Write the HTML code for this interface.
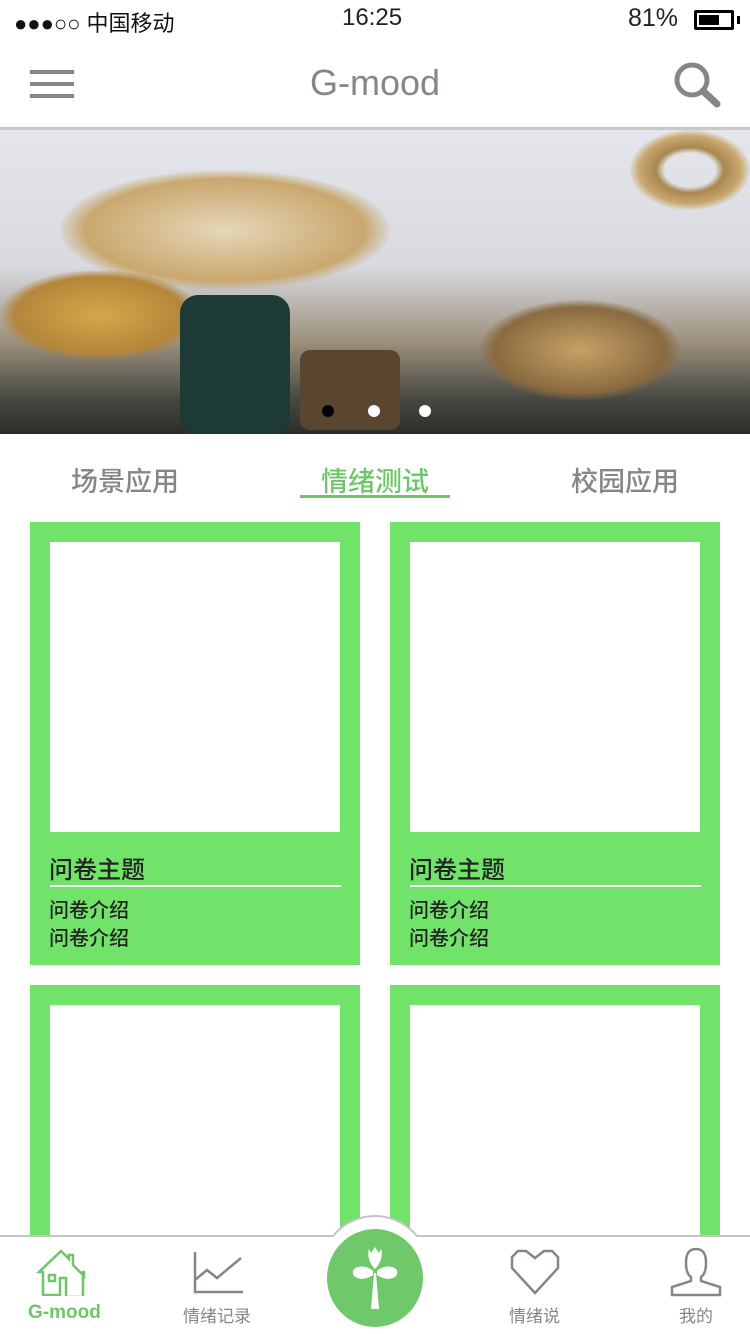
<!DOCTYPE html>
<html><head><meta charset="utf-8"><style>
*{margin:0;padding:0;box-sizing:border-box}
body{width:750px;height:1334px;overflow:hidden;background:#fff;font-family:"Liberation Sans","Noto Sans CJK SC",sans-serif;position:relative}
.abs{position:absolute}
.card{position:absolute;width:330px;background:#72e36a}
.card .in{position:absolute;left:20px;top:20px;width:290px;height:290px;background:#fff}
.t{position:absolute;left:19px;top:328px;font-size:24px;color:#222;font-weight:500}
.ln{position:absolute;left:20px;top:363px;width:291px;height:2px;background:#fff}
.d{position:absolute;left:19px;font-size:20px;color:#222;font-weight:500}
.tab{position:absolute;top:460px;font-size:27px;color:#8a8585;font-weight:500}
.nav{position:absolute;font-size:17px;color:#8a8585;top:1302px}
</style></head><body>
<div class="abs" style="left:14px;top:6px;font-size:22px;color:#111">●●●○○ 中国移动</div>
<div class="abs" style="left:342px;top:4px;font-size:24px;color:#222">16:25</div>
<div class="abs" style="left:628px;top:4px;font-size:25px;color:#222">81%</div>
<div class="abs" style="left:694px;top:10px;width:40px;height:20px;border:3px solid #000;border-radius:2px"><div style="margin:2px;width:20px;height:10px;background:#000"></div></div>
<div class="abs" style="left:737px;top:16px;width:3px;height:8px;background:#000"></div>
<div class="abs" style="left:30px;top:70px;width:44px;height:4px;background:#8a8585"></div>
<div class="abs" style="left:30px;top:82px;width:44px;height:4px;background:#8a8585"></div>
<div class="abs" style="left:30px;top:94px;width:44px;height:4px;background:#8a8585"></div>
<div class="abs" style="left:0;width:750px;top:62px;text-align:center;font-size:36px;color:#8a8585">G-mood</div>
<svg class="abs" style="left:672px;top:60px" width="52" height="48"><circle cx="20" cy="20" r="15" fill="none" stroke="#8a8585" stroke-width="5"/><line x1="31" y1="31" x2="45" y2="44" stroke="#8a8585" stroke-width="7" stroke-linecap="round"/></svg>
<div class="abs" style="left:0;top:127px;width:750px;height:3px;background:#c8c8c8"></div>
<div class="abs" style="left:0;top:130px;width:750px;height:304px;overflow:hidden;background:linear-gradient(180deg,#e4e6ec 0%,#d8dae0 45%,#9b8f7c 70%,#4a4a44 88%,#2c2c2a 100%)">
<div class="abs" style="left:60px;top:40px;width:330px;height:120px;border-radius:50%;background:radial-gradient(#e6d6b8,#c9a86e 60%,transparent 72%)"></div>
<div class="abs" style="left:0;top:140px;width:200px;height:90px;border-radius:50%;background:radial-gradient(#d4a84a,#b4863a 60%,transparent 72%)"></div>
<div class="abs" style="left:180px;top:165px;width:110px;height:140px;border-radius:18px;background:#1e3a34"></div>
<div class="abs" style="left:630px;top:0;width:120px;height:80px;border-radius:50%;background:radial-gradient(transparent 30%,#a88850 40%,#c9a870 60%,transparent 72%)"></div>
<div class="abs" style="left:480px;top:170px;width:200px;height:100px;border-radius:50%;background:radial-gradient(#c7a266,#8a6a40 60%,transparent 72%)"></div>
<div class="abs" style="left:300px;top:220px;width:100px;height:80px;background:#5a4530;border-radius:10px"></div>
<div class="abs" style="left:322px;top:275px;width:12px;height:12px;border-radius:50%;background:#000"></div>
<div class="abs" style="left:368px;top:275px;width:12px;height:12px;border-radius:50%;background:#fff"></div>
<div class="abs" style="left:419px;top:275px;width:12px;height:12px;border-radius:50%;background:#fff"></div>
</div>
<div class="tab" style="left:71px">场景应用</div>
<div class="tab" style="left:321px;color:#6fc66a">情绪测试</div>
<div class="abs" style="left:300px;top:495px;width:150px;height:3px;background:#6fc66a"></div>
<div class="tab" style="left:571px">校园应用</div>
<div class="card" style="left:30px;top:522px;height:443px"><div class="in"></div><div class="t">问卷主题</div><div class="ln"></div><div class="d" style="top:372px">问卷介绍</div><div class="d" style="top:400px">问卷介绍</div></div>
<div class="card" style="left:390px;top:522px;height:443px"><div class="in"></div><div class="t">问卷主题</div><div class="ln"></div><div class="d" style="top:372px">问卷介绍</div><div class="d" style="top:400px">问卷介绍</div></div>
<div class="card" style="left:30px;top:985px;height:260px"><div class="in"></div></div>
<div class="card" style="left:390px;top:985px;height:260px"><div class="in"></div></div>
<div class="abs" style="left:0;top:1235px;width:750px;height:99px;background:#fff;border-top:2px solid #c4c4c4"></div>
<div class="abs" style="left:320px;top:1215px;width:110px;height:110px;border-radius:50%;background:#fff;border:2px solid #c4c4c4"></div>
<div class="abs" style="left:316px;top:1237px;width:118px;height:97px;background:#fff"></div>
<div class="abs" style="left:327px;top:1229px;width:96px;height:98px;border-radius:50%;background:#6fc86a"></div>
<svg class="abs" style="left:347px;top:1245px" width="56" height="68"><g fill="#fff"><path d="M28 2l-4 6-2-4c-2 6 0 14 6 20 6-6 8-14 6-20l-2 4z"/><path d="M26 26c-6-6-18-6-20 0-2 6 8 12 20 4z"/><path d="M30 26c6-6 18-6 20 0 2 6-8 12-20 4z"/><path d="M27 28h2l3 36h-8z"/></g></svg>
<svg class="abs" style="left:36px;top:1248px" width="54" height="48" fill="none" stroke="#6fc66a" stroke-width="2.5"><path d="M3 24L25 3l8 8V7h4v10l11 11v-4h-1v25H30V30h-6v17H7V24z"/><rect x="13" y="27" width="6" height="6"/></svg>
<div class="abs" style="left:28px;top:1302px;font-size:19px;color:#6fc66a;font-weight:bold">G-mood</div>
<svg class="abs" style="left:192px;top:1250px" width="52" height="44" fill="none" stroke="#8a8585" stroke-width="2.5"><path d="M3 2v40h48M3 30l12-10 10 8 24-20"/></svg>
<div class="nav" style="left:183px">情绪记录</div>
<svg class="abs" style="left:508px;top:1248px" width="54" height="48" fill="none" stroke="#8a8585" stroke-width="2.5"><path d="M27 45L4 20V9l6-6h8l9 7 9-7h8l6 6v11z"/></svg>
<div class="nav" style="left:509px">情绪说</div>
<svg class="abs" style="left:668px;top:1247px" width="56" height="50" fill="none" stroke="#8a8585" stroke-width="2.5"><path d="M28 2c-8 0-10 6-10 14s2 12 5 14v4L4 40v8h48v-8l-19-6v-4c3-2 5-6 5-14S36 2 28 2z"/></svg>
<div class="nav" style="left:679px">我的</div>
</body></html>
